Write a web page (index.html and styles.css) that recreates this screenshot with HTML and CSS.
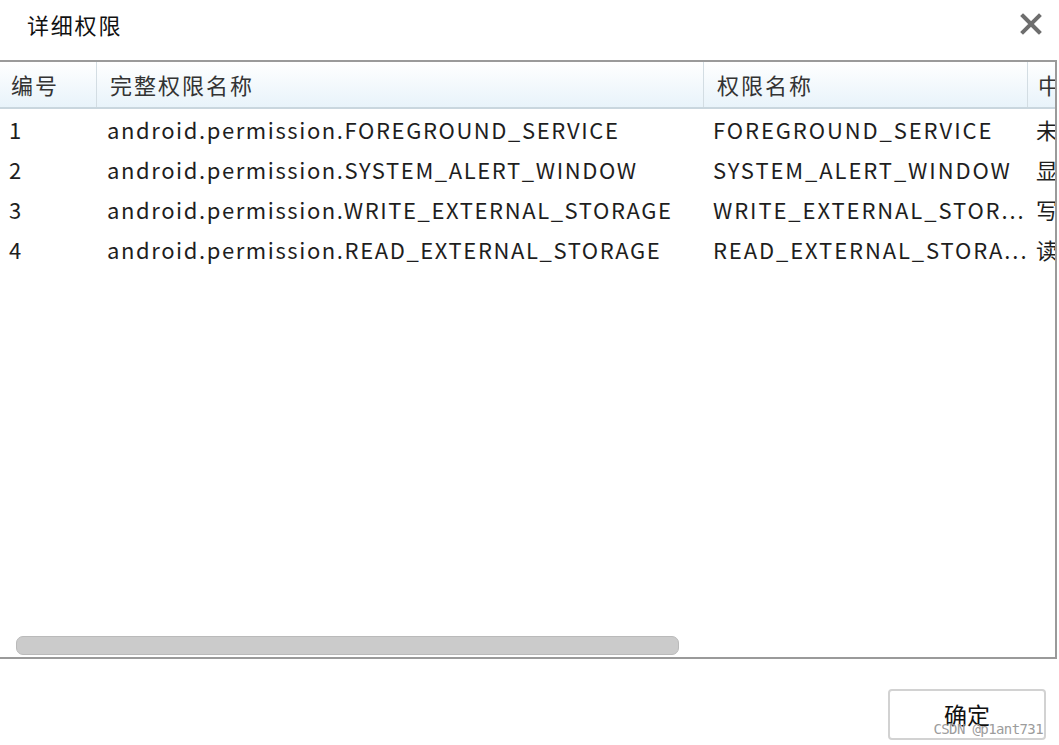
FILE: index.html
```html
<!DOCTYPE html>
<html lang="zh-CN">
<head>
<meta charset="utf-8">
<title>详细权限</title>
<link rel="stylesheet" href="styles.css">
</head>
<body>
<div class="dialog">
  <div class="titlebar">
    <div class="title">详细权限</div>
    <svg class="close" width="22" height="22" viewBox="0 0 22 22"><path d="M3 3L19 19M19 3L3 19" stroke="#6e6e6e" stroke-width="4" stroke-linecap="square"/></svg>
  </div>
  <div class="table">
    <div class="thead">
      <div class="th c1">编号</div>
      <div class="th c2">完整权限名称</div>
      <div class="th c3">权限名称</div>
      <div class="th c4">中文名称</div>
    </div>
    <div class="tbody">
      <div class="tr"><div class="td c1">1</div><div class="td c2">android.permission.FOREGROUND_SERVICE</div><div class="td c3">FOREGROUND_SERVICE</div><div class="td c4">未知权限</div></div>
      <div class="tr"><div class="td c1">2</div><div class="td c2">android.permission.SYSTEM_ALERT_WINDOW</div><div class="td c3">SYSTEM_ALERT_WINDOW</div><div class="td c4">显示悬浮窗</div></div>
      <div class="tr"><div class="td c1">3</div><div class="td c2">android.permission.WRITE_EXTERNAL_STORAGE</div><div class="td c3">WRITE_EXTERNAL_STOR...</div><div class="td c4">写入外部存储</div></div>
      <div class="tr"><div class="td c1">4</div><div class="td c2">android.permission.READ_EXTERNAL_STORAGE</div><div class="td c3">READ_EXTERNAL_STORA...</div><div class="td c4">读取外部存储</div></div>
      <div class="hscroll"><div class="thumb"></div></div>
    </div>
  </div>
  <div class="footer">
    <button class="ok">确定<span class="watermark">CSDN @p1ant731</span></button>
  </div>
</div>
</body>
</html>
```
FILE: styles.css
```css
html, body {
  margin: 0;
  padding: 0;
  background: #fff;
}
body {
  width: 1059px;
  height: 745px;
  overflow: hidden;
  font-family: "Noto Sans CJK SC", "Noto Sans", sans-serif;
  color: #222;
}
.dialog {
  display: flex;
  flex-direction: column;
  height: 745px;
}
.titlebar {
  height: 60px;
  display: flex;
  align-items: center;
  justify-content: space-between;
  padding: 0 17px 12px 27px;
  box-sizing: border-box;
}
.title {
  font-size: 22px;
  letter-spacing: 1.8px;
  color: #111;
}
.close {
  display: block;
}
.table {
  width: 1057px;
  height: 599px;
  box-sizing: border-box;
  border-top: 2px solid #9a9a9a;
  border-right: 2px solid #9a9a9a;
  border-bottom: 2px solid #9a9a9a;
  display: flex;
  flex-direction: column;
  overflow: hidden;
}
.thead {
  display: grid;
  grid-template-columns: 97px 607px 324px 200px;
  height: 47px;
  box-sizing: border-box;
  background: linear-gradient(#ffffff, #e8f3fa);
  border-bottom: 2px solid #c9d6de;
}
.th {
  font-size: 22px;
  letter-spacing: 2px;
  color: #333;
  display: flex;
  align-items: center;
  padding-left: 12px;
  padding-bottom: 1px;
  border-right: 1px solid #d3dde3;
  white-space: nowrap;
}
.th.c1 { padding-left: 11px; }
.th.c2, .th.c3 { padding-left: 13px; }
.th.c4 { padding-left: 10px; }
.tbody {
  flex: 1;
  display: flex;
  flex-direction: column;
  padding-top: 0;
}
.tr {
  display: grid;
  grid-template-columns: 97px 607px 324px 200px;
  height: 40px;
  align-items: center;
}
.td {
  font-size: 22px;
  letter-spacing: 1.6px;
  white-space: nowrap;
  overflow: hidden;
  color: #1e1e1e;
}
.td.c1 { padding-left: 9px; }
.td.c2 { padding-left: 10px; }
.td.c3 { padding-left: 9px; letter-spacing: 1.9px; }
.td.c4 { padding-left: 8px; }
.hscroll {
  margin-top: auto;
  height: 20px;
  padding: 0 0 1px 16px;
}
.thumb {
  width: 663px;
  height: 19px;
  box-sizing: border-box;
  background: #cbcbcb;
  border: 1px solid #bababa;
  border-radius: 7px;
}
.footer {
  flex: 1;
  display: flex;
  justify-content: flex-end;
  align-items: flex-start;
  padding: 30px 13px 0 0;
}
.ok {
  position: relative;
  width: 158px;
  height: 51px;
  background: #fff;
  border: 2px solid #d2d2d2;
  border-radius: 4px;
  font-family: "Noto Sans CJK SC", sans-serif;
  font-size: 23px;
  color: #111;
  padding: 0 0 2px 0;
}
.watermark {
  position: absolute;
  right: 1px;
  bottom: 1px;
  font-family: "DejaVu Sans Mono", monospace;
  font-size: 14px;
  color: #9c9c9c;
  letter-spacing: -0.6px;
}
```
